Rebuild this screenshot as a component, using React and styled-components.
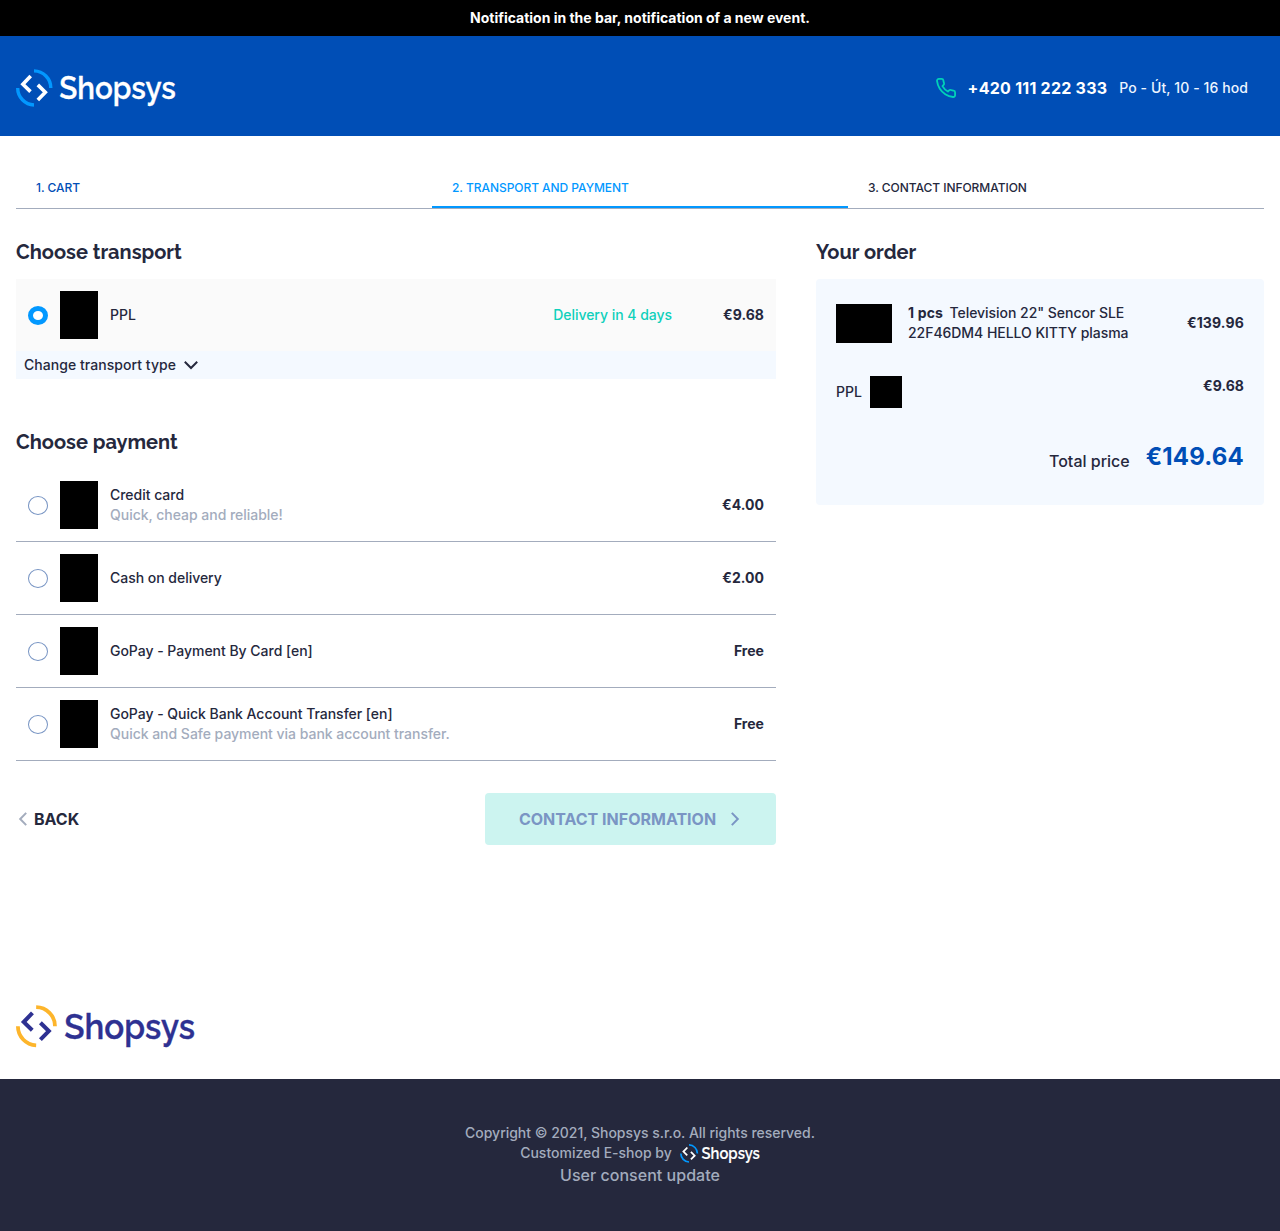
import React from "react";
import styled, { createGlobalStyle } from "styled-components";

const GlobalStyle = createGlobalStyle`
  *, *::before, *::after { box-sizing: border-box; }
  body {
    margin: 0;
    background: #ffffff;
    color: #25283d;
    font: 500 14px/20px Inter, "Liberation Sans", sans-serif;
    letter-spacing: -0.025px;
  }
`;

const NotificationBar = styled.div`
  padding: 8px 16px;
  background: #000;
  color: #fff;
  font-weight: 700;
  letter-spacing: -0.01px;
  text-align: center;
`;

const Header = styled.header`
  display: flex;
  align-items: center;
  justify-content: space-between;
  height: 100px;
  padding: 4px 32px 0 16px;
  background: #004eb6;
  color: #fff;
`;

const Contact = styled.div`
  display: flex;
  align-items: center;
  gap: 12px;
`;

const Phone = styled.a`
  font-size: 16px;
  font-weight: 700;
  letter-spacing: 0.24px;
`;

const OpeningHours = styled.span`
  color: #edf5ff;
  letter-spacing: 0.09px;
`;

const LogoSvg = styled.svg`
  display: block;
  flex: none;
  overflow: visible;
`;

const LogoText = styled.text`
  font-family: Raleway, Lato, sans-serif;
  font-size: 32px;
  font-weight: 600;
  letter-spacing: 0;
`;

const Steps = styled.ol`
  display: grid;
  grid-template-columns: repeat(3, 1fr);
  margin: 32px 16px 0;
  padding: 0;
  height: 41px;
  border-bottom: 1px solid #a3acbd;
  list-style: none;
`;

const Step = styled.li`
  padding: 10px 20px 8px;
  border-bottom: 2px solid ${(p) => (p.$active ? "#0298ff" : "transparent")};
  color: ${(p) => p.$color};
  font-size: 12px;
  letter-spacing: -0.05px;
  text-transform: uppercase;
`;

const Columns = styled.main`
  display: grid;
  grid-template-columns: 760px 448px;
  gap: 40px;
  align-items: start;
  padding: 31px 16px 0;
`;

const Heading = styled.h2`
  margin: 0 0 15px;
  font: 700 20px/24px Raleway, Lato, sans-serif;
  letter-spacing: 0;
`;

const Section = styled.section`
  margin-bottom: ${(p) => p.$gap || "0"};
`;

const OptionRow = styled.label`
  display: flex;
  align-items: center;
  gap: 12px;
  padding: 12px;
  background: ${(p) => (p.$selected ? "#fafafa" : "transparent")};
  border-bottom: ${(p) => (p.$selected ? "0" : "1px solid #a3acbd")};
`;

const Radio = styled.span`
  flex: none;
  width: 20px;
  height: 19px;
  margin-top: 1px;
  border: ${(p) => (p.$checked ? "5px solid #0298ff" : "1px solid #7794c3")};
  border-radius: 50%;
  background: #fff;
`;

const Thumb = styled.span`
  flex: none;
  width: ${(p) => p.$w}px;
  height: ${(p) => p.$h}px;
  background: #000;
`;

const OptionText = styled.span`
  display: flex;
  flex: 1;
  flex-direction: column;
`;

const Description = styled.span`
  color: #a3acbd;
`;

const Delivery = styled.span`
  color: #0fd0bb;
  letter-spacing: -0.03px;
`;

const Price = styled.strong`
  min-width: 80px;
  font-weight: 700;
  letter-spacing: ${(p) => p.$tracking || "0.03px"};
  text-align: right;
`;

const ChangeBar = styled.button`
  display: flex;
  align-items: center;
  gap: 8px;
  width: 100%;
  height: 28px;
  padding: 0 8px;
  border: 0;
  background: #f4f9ff;
  color: inherit;
  font: inherit;
  letter-spacing: 0.05px;
`;

const Actions = styled.div`
  display: flex;
  align-items: center;
  justify-content: space-between;
`;

const BackLink = styled.a`
  display: flex;
  align-items: center;
  gap: 6px;
  padding-left: 2px;
  font-size: 16px;
  font-weight: 700;
  letter-spacing: 0;
  text-transform: uppercase;
`;

const NextButton = styled.button`
  display: flex;
  align-items: center;
  justify-content: center;
  gap: 14px;
  width: 291px;
  height: 52px;
  padding: 0 2px 0 0;
  border: 0;
  border-radius: 4px;
  background: #ccf4f0;
  color: #7a95c4;
  font: 700 16px/24px Inter, sans-serif;
  letter-spacing: 0;
  text-transform: uppercase;
`;

const OrderBox = styled.div`
  height: 226px;
  padding: 24px 20px;
  border-radius: 4px;
  background: #f4f9ff;
`;

const OrderItem = styled.div`
  display: flex;
  align-items: center;
  gap: 16px;
  height: 40px;
`;

const ItemName = styled.span`
  flex: 1;
  letter-spacing: -0.04px;
`;

const Quantity = styled.strong`
  margin-right: 6.5px;
  font-weight: 700;
  letter-spacing: 0.15px;
`;

const OrderTransport = styled.div`
  display: flex;
  align-items: flex-start;
  justify-content: space-between;
  margin-top: 33px;
`;

const TransportName = styled.span`
  display: flex;
  align-items: center;
  gap: 8px;
`;

const Total = styled.div`
  display: flex;
  align-items: flex-end;
  justify-content: flex-end;
  gap: 16px;
  margin-top: 31px;
  font-size: 16px;
  line-height: 28px;
  letter-spacing: 0;
`;

const TotalAmount = styled.strong`
  color: #004eb6;
  font-size: 24px;
  font-weight: 700;
  line-height: 36px;
  letter-spacing: 0.18px;
`;

const FooterLogo = styled.div`
  height: 234px;
  padding: 160px 16px 0;
`;

const Footer = styled.footer`
  display: flex;
  flex-direction: column;
  align-items: center;
  height: 152px;
  padding-top: 44px;
  background: #25283d;
  color: #a3acbd;
`;

const Credit = styled.div`
  display: flex;
  align-items: center;
  gap: 8px;
  height: 20px;
  letter-spacing: 0;
`;

const ConsentLink = styled.a`
  font-size: 16px;
  line-height: 24px;
  letter-spacing: 0.03px;
`;

function Logo({ width, height, arc, ink }) {
  return (
    <LogoSvg width={width} height={height} viewBox="0 0 159.5 38" preserveAspectRatio="xMinYMin meet" role="img" aria-label="Shopsys">
      <g fill="none" strokeWidth="3.4">
        <path stroke={arc} d="M18 1.9A17 17 0 0 1 34.8 19M1.7 19A17 17 0 0 0 18 36" />
        <path stroke={ink} strokeWidth="3.6" d="M14.7 7 6.9 15.2l7.6 7.4M21.8 15.9l7.5 7.4-7.5 7.6" />
      </g>
      <LogoText x="43.2" y="30.2" textLength="116.6" lengthAdjust="spacingAndGlyphs" fill={ink} stroke={ink} strokeWidth="0.3">Shopsys</LogoText>
    </LogoSvg>
  );
}

function Chevron({ width, d, color = "currentColor" }) {
  return (
    <svg width={width} height="14" viewBox={`0 0 ${width} 14`} fill="none" stroke={color} strokeWidth="2">
      <path d={d} />
    </svg>
  );
}

function PhoneIcon() {
  return (
    <svg width="20" height="20" viewBox="1 1 22 22" overflow="visible" fill="none" stroke="#00d1b8" strokeWidth="2" strokeLinejoin="round">
      <path d="M22 16.92v3a2 2 0 0 1-2.18 2 19.79 19.79 0 0 1-8.63-3.07 19.5 19.5 0 0 1-6-6 19.79 19.79 0 0 1-3.07-8.67A2 2 0 0 1 4.11 2h3a2 2 0 0 1 2 1.72 12.84 12.84 0 0 0 .7 2.81 2 2 0 0 1-.45 2.11L8.09 9.91a16 16 0 0 0 6 6l1.27-1.27a2 2 0 0 1 2.11-.45 12.84 12.84 0 0 0 2.81.7A2 2 0 0 1 22 16.92z" />
    </svg>
  );
}

const payments = [
  { name: "Credit card", note: "Quick, cheap and reliable!", price: "€4.00" },
  { name: "Cash on delivery", price: "€2.00" },
  { name: "GoPay - Payment By Card [en]", price: "Free" },
  { name: "GoPay - Quick Bank Account Transfer [en]", note: "Quick and Safe payment via bank account transfer.", price: "Free" },
];

export default function App() {
  return (
    <>
      <GlobalStyle />
      <NotificationBar>Notification in the bar, notification of a new event.</NotificationBar>
      <Header>
        <Logo width={159.5} height={38} arc="#0298ff" ink="#fff" />
        <Contact>
          <PhoneIcon />
          <Phone>+420 111 222 333</Phone>
          <OpeningHours>Po - Út, 10 - 16 hod</OpeningHours>
        </Contact>
      </Header>
      <Steps>
        <Step $color="#004eb6">1. Cart</Step>
        <Step $color="#0298ff" $active>2. Transport and payment</Step>
        <Step $color="#25283d">3. Contact information</Step>
      </Steps>
      <Columns>
        <div>
          <Section $gap="51px">
            <Heading>Choose transport</Heading>
            <OptionRow $selected>
              <Radio $checked />
              <Thumb $w={38} $h={48} />
              <OptionText>PPL</OptionText>
              <Delivery>Delivery in 4 days</Delivery>
              <Price>€9.68</Price>
            </OptionRow>
            <ChangeBar>
              Change transport type
              <Chevron width={14} d="M.8 3.8 7 10l6.2-6.2" />
            </ChangeBar>
          </Section>
          <Section $gap="32px">
            <Heading>Choose payment</Heading>
            {payments.map((p) => (
              <OptionRow key={p.name}>
                <Radio />
                <Thumb $w={38} $h={48} />
                <OptionText>
                  <span>{p.name}</span>
                  {p.note && <Description>{p.note}</Description>}
                </OptionText>
                <Price>{p.price}</Price>
              </OptionRow>
            ))}
          </Section>
          <Actions>
            <BackLink>
              <Chevron width={10} d="M8.2.9 2.2 7l6 6.1" color="#a3acbd" />
              Back
            </BackLink>
            <NextButton>
              Contact information
              <Chevron width={10} d="M1.8.9l6 6.1-6 6.1" />
            </NextButton>
          </Actions>
        </div>
        <Section>
          <Heading>Your order</Heading>
          <OrderBox>
            <OrderItem>
              <Thumb $w={56} $h={39} />
              <ItemName>
                <Quantity>1 pcs</Quantity>
                Television 22" Sencor SLE<br />22F46DM4 HELLO KITTY plasma
              </ItemName>
              <Price $tracking="0.15px">€139.96</Price>
            </OrderItem>
            <OrderTransport>
              <TransportName>PPL<Thumb $w={32} $h={32} /></TransportName>
              <Price>€9.68</Price>
            </OrderTransport>
            <Total>
              <span>Total price</span>
              <TotalAmount>€149.64</TotalAmount>
            </Total>
          </OrderBox>
        </Section>
      </Columns>
      <FooterLogo>
        <Logo width={178.6} height={42.6} arc="#fdb52b" ink="#2e3192" />
      </FooterLogo>
      <Footer>
        <div>Copyright © 2021, Shopsys s.r.o. All rights reserved.</div>
        <Credit>
          Customized E-shop by
          <Logo width={80} height={19} arc="#0298ff" ink="#fff" />
        </Credit>
        <ConsentLink>User consent update</ConsentLink>
      </Footer>
    </>
  );
}
